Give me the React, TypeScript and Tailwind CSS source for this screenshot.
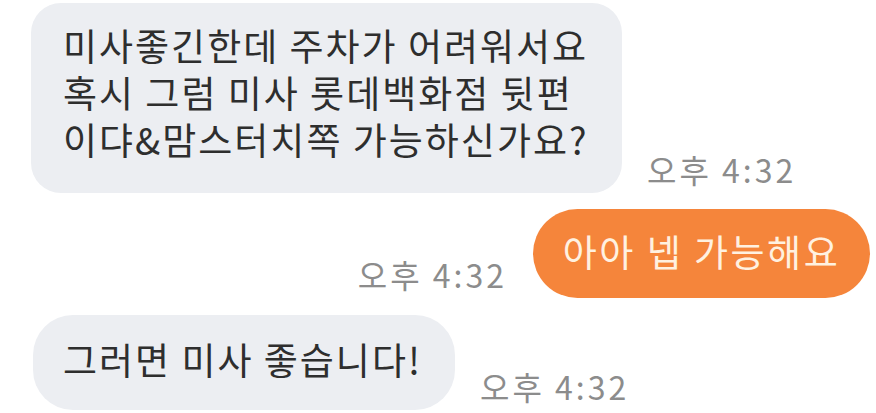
const font = { fontFamily: '"Noto Sans CJK KR", "Noto Sans", sans-serif' };

const Time = ({ className = "" }: { className?: string }) => (
  <span className={`text-[32px] leading-none tracking-[3px] text-[#8c8c8c] mb-[8px] whitespace-nowrap ${className}`}>
    오후 4:32
  </span>
);

export default function App() {
  return (
    <div
      className="w-[876px] h-[413px] bg-white overflow-hidden flex flex-col pt-[3px]"
      style={font}
    >
      <div className="flex items-end pl-[31px]">
        <div className="bg-[#eceef2] rounded-[30px] w-[591px] h-[190px] pl-[32px] pt-[19px] text-[37px] leading-[47px] text-[#2e2e2e] tracking-[2px]">
          <p>미사좋긴한데 주차가 어려워서요</p>
          <p>혹시 그럼 미사 롯데백화점 뒷편</p>
          <p>이댜&amp;맘스터치쪽 가능하신가요?</p>
        </div>
        <Time className="ml-[25px]" />
      </div>

      <div className="flex items-end justify-end pr-[6px] mt-[16px]">
        <Time className="mr-[26px]" />
        <div className="bg-[#f5853b] rounded-full w-[337px] h-[89px] flex items-center justify-center text-[37px] tracking-[2.5px] text-[#fff1e0] pb-[4px]">
          아아 넵 가능해요
        </div>
      </div>

      <div className="flex items-end pl-[33px] mt-[17px]">
        <div className="bg-[#eceef2] rounded-[40px] w-[422px] h-[95px] flex items-center pl-[30px] pb-[6px] text-[37px] tracking-[2px] text-[#2e2e2e]">
          그러면 미사 좋습니다!
        </div>
        <Time className="ml-[25px]" />
      </div>
    </div>
  );
}
